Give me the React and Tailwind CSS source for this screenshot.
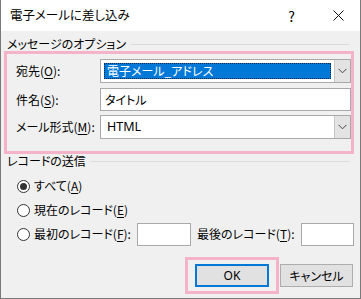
const font = { fontFamily: '"Noto Sans CJK JP", "Noto Sans", sans-serif' };

function Chevron() {
  return (
    <svg width="9" height="6" viewBox="0 0 9 6" fill="none">
      <path d="M0.5 0.8 L4.5 4.8 L8.5 0.8" stroke="#444" strokeWidth="1" />
    </svg>
  );
}

function GroupLabel({ children }) {
  return (
    <div className="flex items-center h-[14px] pl-[6px] pr-[10px]">
      <span className="text-[12px] leading-none text-black">{children}</span>
      <div className="flex-1 h-px bg-[#dcdcdc] ml-[4px]" />
    </div>
  );
}

function Radio({ checked }) {
  return (
    <span className="w-[13px] h-[13px] rounded-full border border-[#333] bg-white flex items-center justify-center shrink-0">
      {checked && <span className="w-[7px] h-[7px] rounded-full bg-[#333]" />}
    </span>
  );
}

function U({ children }) {
  return <span className="underline underline-offset-2">{children}</span>;
}

export default function App() {
  return (
    <div
      className="w-[361px] h-[299px] bg-[#f0f0f0] border-x border-b border-[#7a7a7a] flex flex-col text-black [font-feature-settings:'palt']"
      style={font}
    >
      {/* title bar */}
      <div className="h-[31px] bg-white flex items-center pl-[9px] shrink-0">
        <span className="text-[12.5px]">電子メールに差し込み</span>
        <span className="ml-auto mr-[38px] text-[14px] leading-none">?</span>
        <svg width="11" height="11" viewBox="0 0 11 11" className="mr-[16px]">
          <path d="M0.5 0.5 L10.5 10.5 M10.5 0.5 L0.5 10.5" stroke="#111" strokeWidth="1" />
        </svg>
      </div>

      <div className="mt-[6px]">
        <GroupLabel>メッセージのオプション</GroupLabel>
      </div>

      <div className="ml-[3px] w-[350px] h-[103px] border-[3px] border-[#f5b3c9] flex flex-col pt-[5px] pl-[9px]">
        <div className="flex items-center h-[24px]">
          <span className="w-[84px] text-[12px]">宛先(<U>O</U>):</span>
          <div className="flex-1 h-[24px] border border-[#a9a9a9] bg-white flex">
            <div className="flex-1 p-[3px]">
              <div className="h-full bg-[#0078d7] border border-dotted border-[#0b2a4a] text-white text-[12px] leading-[14px] pl-[2px]">
                電子メール_アドレス
              </div>
            </div>
            <div className="w-[16px] bg-[#e3e3e3] border-l border-[#c8c8c8] flex items-center justify-center">
              <Chevron />
            </div>
          </div>
        </div>

        <div className="flex items-center h-[23px] mt-[5px]">
          <span className="w-[84px] text-[12px]">件名(<U>S</U>):</span>
          <div className="flex-1 h-[23px] border border-[#a9a9a9] bg-white text-[12px] leading-[21px] pl-[4px]">
            タイトル
          </div>
        </div>

        <div className="flex items-center h-[24px] mt-[4px]">
          <span className="w-[84px] text-[12px]">メール形式(<U>M</U>):</span>
          <div className="flex-1 h-[24px] border border-[#a9a9a9] bg-white flex">
            <div className="flex-1 text-[12.5px] leading-[22px] pl-[6px]" style={{ fontFamily: '"Noto Sans", sans-serif' }}>
              HTML
            </div>
            <div className="w-[16px] bg-[#e3e3e3] border-l border-[#c8c8c8] flex items-center justify-center">
              <Chevron />
            </div>
          </div>
        </div>
      </div>

      <GroupLabel>レコードの送信</GroupLabel>

      <div className="mt-[6px] pl-[16px] flex flex-col">
        <div className="flex items-center h-[24px] gap-[4px]">
          <Radio checked />
          <span className="text-[12px]">すべて(<U>A</U>)</span>
        </div>
        <div className="flex items-center h-[24px] gap-[4px]">
          <Radio />
          <span className="text-[12px]">現在のレコード(<U>E</U>)</span>
        </div>
        <div className="flex items-center h-[24px] gap-[4px]">
          <Radio />
          <span className="text-[12px] w-[99px] whitespace-nowrap">最初のレコード(<U>F</U>):</span>
          <div className="w-[54px] h-[23px] border border-[#a9a9a9] bg-white shrink-0" />
          <span className="text-[12px] ml-[2px] w-[100px] whitespace-nowrap">最後のレコード(<U>T</U>):</span>
          <div className="w-[53px] h-[23px] border border-[#a9a9a9] bg-white shrink-0" />
        </div>
      </div>

      <div className="mt-[11px] flex items-start pl-[184px]">
        <div className="w-[94px] h-[37px] border-[3px] border-[#f5b3c9] flex items-center justify-center">
          <div className="w-[74px] h-[23px] border-2 border-[#0078d7] bg-[#e1e1e1] text-[12px] flex items-center justify-center" style={{ fontFamily: '"Noto Sans", sans-serif' }}>
            OK
          </div>
        </div>
        <div className="ml-px mt-[7px] w-[73px] h-[23px] border border-[#adadad] bg-[#e1e1e1] text-[12px] flex items-center justify-center">
          キャンセル
        </div>
      </div>
    </div>
  );
}
